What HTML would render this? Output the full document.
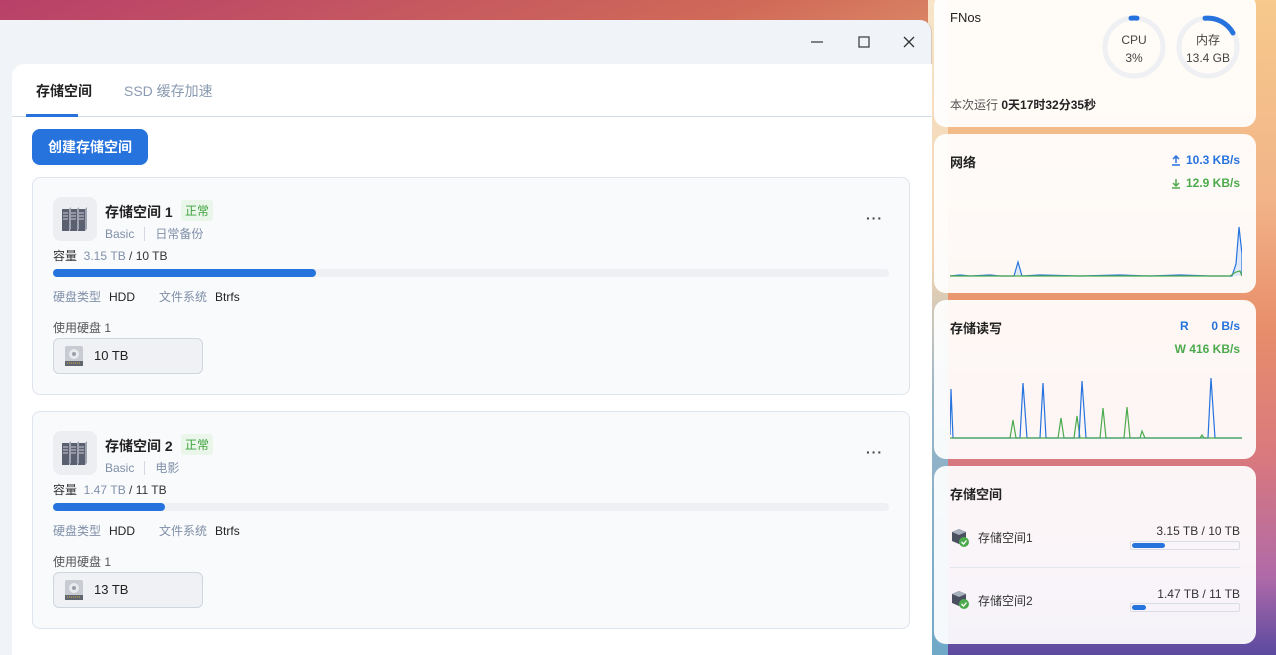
<!DOCTYPE html><html><head><meta charset="utf-8"><style>
*{box-sizing:border-box;margin:0;padding:0}
body{width:1276px;height:655px;overflow:hidden;position:relative;font-family:"Liberation Sans","Noto Sans CJK SC",sans-serif;color:#222;
background:linear-gradient(160deg,#b8406a 0%,#d06a58 25%,#eab07a 45%,#f3c9a0 60%,#e3a6b8 80%,#8a5ab8 100%)}
.bgr{position:absolute;left:928px;top:0;width:348px;height:655px;background:linear-gradient(180deg,#f6c98c 0%,#f2b488 30%,#e88e6a 50%,#d9787e 70%,#b06aa8 88%,#5a4aa0 100%)}
.bgr2{position:absolute;left:928px;top:0;width:20px;height:655px;background:linear-gradient(180deg,#f8e4c8,#f2d4b0 40%,#9ab6c8 60%,#70a8c8 100%)}
.win{position:absolute;left:0;top:20px;width:932px;height:635px;background:#f0f3f7;border-top-right-radius:12px;border-right:1px solid #d8c8b8}
.ctl{position:absolute;top:13px;color:#333}
.panel{position:absolute;left:12px;top:44px;width:920px;height:591px;background:#fff;border-top-left-radius:12px}
.tabs{height:53px;border-bottom:1px solid #d4dce6;position:relative}
.tab{position:absolute;top:17px;font-size:14px}
.btn{position:absolute;left:20px;top:65px;width:116px;height:36px;background:#2673dd;border-radius:8px;color:#fff;font-size:14px;font-weight:bold;text-align:center;line-height:36px}
.card{position:absolute;left:20px;width:878px;height:218px;background:#f9fafc;border:1px solid #dfe5ec;border-radius:8px}
.ico{position:absolute;left:20px;top:19px;width:44px;height:44px;background:#eceef2;border-radius:8px}
.t1{position:absolute;left:72px;top:24px;font-size:14px;font-weight:bold;color:#222}
.ok{position:absolute;left:148px;top:22px;background:#eaf6ea;color:#3fa43f;font-size:12px;padding:2px 4px;border-radius:3px}
.sub{position:absolute;left:72px;top:47px;font-size:12px;color:#8090a8}
.sub span{border-left:1px solid #d4d8e0;margin-left:10px;padding-left:10px}
.dots{position:absolute;right:26px;top:32px;font-size:14px;letter-spacing:1px;color:#444;font-weight:bold}
.cap{position:absolute;left:20px;top:69px;font-size:12px;color:#333}
.cap .g{color:#8090a8}
.bar{position:absolute;left:20px;top:91px;width:836px;height:8px;background:#eef0f3;border-radius:4px}
.bar div{height:8px;background:#2673dd;border-radius:4px}
.meta{position:absolute;left:20px;top:110px;font-size:12px;color:#8090a8}
.meta b{font-weight:normal;color:#222;margin:0 24px 0 8px}
.use{position:absolute;left:20px;top:141px;font-size:12px;color:#555}
.disk{position:absolute;left:20px;top:160px;width:150px;height:36px;background:#eff1f4;border:1px solid #cfd6de;border-radius:6px;font-size:13px;line-height:34px;padding-left:40px}
.w{position:absolute;left:934px;width:322px;background:rgba(255,255,255,.93);border-radius:12px}
.h{position:absolute;left:16px;font-size:13px;font-weight:bold;color:#222}
</style></head><body>
<div class="bgr"></div><div class="bgr2"></div>
<div class="win">
 <svg class="ctl" style="left:808px" width="18" height="18"><line x1="3" y1="9" x2="15" y2="9" stroke="#444" stroke-width="1.3"/></svg>
 <svg class="ctl" style="left:855px" width="18" height="18"><rect x="4" y="4" width="10" height="10" fill="none" stroke="#444" stroke-width="1.3"/></svg>
 <svg class="ctl" style="left:900px" width="18" height="18"><path d="M4 4L14 14M14 4L4 14" stroke="#333" stroke-width="1.3"/></svg>
 <div class="panel">
  <div class="tabs"><div class="tab" style="left:24px;font-weight:bold">存储空间</div><div style="position:absolute;left:14px;bottom:-1px;width:52px;height:3px;background:#2673dd"></div><div class="tab" style="left:112px;color:#8a9ab0">SSD 缓存加速</div></div>
  <div class="btn">创建存储空间</div>
  <div class="card" style="top:113px">
   <div class="ico"><svg width="44" height="44"><g fill="#5a6070"><rect x="9" y="12" width="7" height="22"/><rect x="17" y="12" width="7" height="22"/><rect x="25" y="12" width="7" height="22"/></g><g fill="#9ea4b0"><polygon points="16,12 18,10 18,32 16,34"/><polygon points="24,12 26,10 26,32 24,34"/><polygon points="32,12 34,10 34,32 32,34"/></g><g stroke="#c8ccd4" stroke-width="1"><path d="M10 16h5M10 19h5M10 22h5M18 16h5M18 19h5M18 22h5M26 16h5M26 19h5M26 22h5"/></g></svg></div>
   <div class="t1">存储空间 1</div><div class="ok">正常</div>
   <div class="sub">Basic<span>日常备份</span></div><div class="dots">···</div>
   <div class="cap">容量&nbsp;&nbsp;<span class="g">3.15 TB</span> / 10 TB</div>
   <div class="bar"><div style="width:263px"></div></div>
   <div class="meta">硬盘类型<b>HDD</b>文件系统<b>Btrfs</b></div>
   <div class="use">使用硬盘 1</div>
   <div class="disk"><svg style="position:absolute;left:9px;top:6px" width="22" height="22"><rect x="2" y="1" width="18" height="20" rx="2" fill="#c8ccd2"/><circle cx="11" cy="9" r="5" fill="#e8eaee"/><circle cx="11" cy="9" r="2" fill="#9aa0a8"/><rect x="2" y="16" width="18" height="5" fill="#606670"/><path d="M4 18h14" stroke="#d8b040" stroke-dasharray="1 1"/></svg>10 TB</div>
  </div>
  <div class="card" style="top:347px">
   <div class="ico"><svg width="44" height="44"><g fill="#5a6070"><rect x="9" y="12" width="7" height="22"/><rect x="17" y="12" width="7" height="22"/><rect x="25" y="12" width="7" height="22"/></g><g fill="#9ea4b0"><polygon points="16,12 18,10 18,32 16,34"/><polygon points="24,12 26,10 26,32 24,34"/><polygon points="32,12 34,10 34,32 32,34"/></g><g stroke="#c8ccd4" stroke-width="1"><path d="M10 16h5M10 19h5M10 22h5M18 16h5M18 19h5M18 22h5M26 16h5M26 19h5M26 22h5"/></g></svg></div>
   <div class="t1">存储空间 2</div><div class="ok">正常</div>
   <div class="sub">Basic<span>电影</span></div><div class="dots">···</div>
   <div class="cap">容量&nbsp;&nbsp;<span class="g">1.47 TB</span> / 11 TB</div>
   <div class="bar"><div style="width:112px"></div></div>
   <div class="meta">硬盘类型<b>HDD</b>文件系统<b>Btrfs</b></div>
   <div class="use">使用硬盘 1</div>
   <div class="disk"><svg style="position:absolute;left:9px;top:6px" width="22" height="22"><rect x="2" y="1" width="18" height="20" rx="2" fill="#c8ccd2"/><circle cx="11" cy="9" r="5" fill="#e8eaee"/><circle cx="11" cy="9" r="2" fill="#9aa0a8"/><rect x="2" y="16" width="18" height="5" fill="#606670"/><path d="M4 18h14" stroke="#d8b040" stroke-dasharray="1 1"/></svg>13 TB</div>
  </div>
 </div>
</div>

<div class="w" style="top:-6px;height:133px">
 <div class="h" style="top:16px;font-weight:normal;font-size:13px">FNos</div>
 <svg style="position:absolute;left:167px;top:20px" width="66" height="66"><circle cx="33" cy="33" r="29" fill="none" stroke="#eef0f3" stroke-width="5"/><path d="M30 4.2A29 29 0 0 1 36 4.2" fill="none" stroke="#2673dd" stroke-width="5" stroke-linecap="round"/><text x="33" y="30" text-anchor="middle" font-size="12" fill="#444" font-family="Liberation Sans">CPU</text><text x="33" y="48" text-anchor="middle" font-size="12" fill="#444" font-family="Liberation Sans">3%</text></svg>
 <svg style="position:absolute;left:241px;top:20px" width="66" height="66"><circle cx="33" cy="33" r="29" fill="none" stroke="#eef0f3" stroke-width="5"/><path d="M30 4.2A29 29 0 0 1 58 19" fill="none" stroke="#2673dd" stroke-width="5" stroke-linecap="round"/><text x="33" y="30" text-anchor="middle" font-size="12" fill="#444" font-family="Liberation Sans,Noto Sans CJK SC">内存</text><text x="33" y="48" text-anchor="middle" font-size="12" fill="#444" font-family="Liberation Sans">13.4 GB</text></svg>
 <div style="position:absolute;left:16px;top:102px;font-size:12px;color:#555">本次运行 <b style="color:#222">0天17时32分35秒</b></div>
</div>
<div class="w" style="top:134px;height:159px">
 <div class="h" style="top:18px">网络</div>
 <svg style="position:absolute;left:237px;top:20px" width="10" height="12"><path d="M1 11h8M5 9V2M2 5l3-3l3 3" stroke="#2673dd" stroke-width="1.5" fill="none"/></svg>
 <div style="position:absolute;right:16px;top:19px;font-size:12px;color:#2673dd;font-weight:bold">10.3 KB/s</div>
 <svg style="position:absolute;left:237px;top:43px" width="10" height="12"><path d="M1 11h8M5 2V9M2 6l3 3l3-3" stroke="#4caa4c" stroke-width="1.5" fill="none"/></svg>
 <div style="position:absolute;right:16px;top:42px;font-size:12px;color:#4caa4c;font-weight:bold">12.9 KB/s</div>
 <svg style="position:absolute;left:16px;top:80px" width="292" height="64"><path d="M0 62 L10 61 20 62 40 61 50 62 64 62 68 48 72 62 90 61 130 62 170 61 200 62 230 61 260 62 282 62 286 50 289 13 292 40 292 62 Z" fill="#dfe9f8"/><polyline points="0,62 10,61 20,62 40,61 50,62 64,62 68,48 72,62 90,61 130,62 170,61 200,62 230,61 260,62 282,62 286,50 289,13 292,40 292,62" fill="none" stroke="#2673dd" stroke-width="1.2"/><polyline points="0,62 100,62 200,62 280,62 286,58 290,57 292,62" fill="none" stroke="#4caa4c" stroke-width="1.2"/></svg>
</div>
<div class="w" style="top:300px;height:159px">
 <div class="h" style="top:18px">存储读写</div>
 <div style="position:absolute;left:246px;top:19px;font-size:12px;color:#2673dd;font-weight:bold">R</div>
 <div style="position:absolute;right:16px;top:19px;font-size:12px;color:#2673dd;font-weight:bold">0 B/s</div>
 <div style="position:absolute;right:16px;top:42px;font-size:12px;color:#4caa4c;font-weight:bold">W 416 KB/s</div>
 <svg style="position:absolute;left:16px;top:75px" width="292" height="70"><polyline points="0,63 60,63 63,45 66,63 108,63 111,43 114,63 124,63 127,41 130,63 150,63 153,33 156,63 174,63 177,32 180,63 190,63 192,56 195,63 250,63 252,60 254,63 292,63" fill="none" stroke="#4caa4c" stroke-width="1.2"/><polyline points="0,60 1,14 3,63 70,63 73,8 77,63 90,63 93,8 96,63 129,63 132,6 136,63 258,63 261,3 265,63 292,63" fill="none" stroke="#2673dd" stroke-width="1.2"/><polyline points="0,63 292,63" stroke="#4caa4c" stroke-width="1"/></svg>
</div>
<div class="w" style="top:466px;height:178px">
 <div class="h" style="top:18px">存储空间</div>
 <svg style="position:absolute;left:16px;top:61px" width="20" height="20"><path d="M2 5L9 2L16 5V14L9 17L2 14Z" fill="#4a5060"/><path d="M2 5L9 8L16 5L9 2Z" fill="#a8b0bc"/><circle cx="14" cy="15" r="5" fill="#4caa4c"/><path d="M11.5 15l2 2l3-3.5" stroke="#fff" fill="none" stroke-width="1.3"/></svg>
 <div style="position:absolute;left:44px;top:63px;font-size:12px;color:#333">存储空间1</div>
 <div style="position:absolute;right:16px;top:58px;font-size:12px;color:#333">3.15 TB / 10 TB</div>
 <div style="position:absolute;left:196px;top:75px;width:110px;height:9px;border:1px solid #d8dce4;border-radius:2px"><div style="width:33px;height:5px;margin:1px;background:#2673dd;border-radius:3px"></div></div>
 <div style="position:absolute;left:16px;right:16px;top:101px;height:1px;background:#e2e6ec"></div>
 <svg style="position:absolute;left:16px;top:123px" width="20" height="20"><path d="M2 5L9 2L16 5V14L9 17L2 14Z" fill="#4a5060"/><path d="M2 5L9 8L16 5L9 2Z" fill="#a8b0bc"/><circle cx="14" cy="15" r="5" fill="#4caa4c"/><path d="M11.5 15l2 2l3-3.5" stroke="#fff" fill="none" stroke-width="1.3"/></svg>
 <div style="position:absolute;left:44px;top:126px;font-size:12px;color:#333">存储空间2</div>
 <div style="position:absolute;right:16px;top:121px;font-size:12px;color:#333">1.47 TB / 11 TB</div>
 <div style="position:absolute;left:196px;top:137px;width:110px;height:9px;border:1px solid #d8dce4;border-radius:2px"><div style="width:14px;height:5px;margin:1px;background:#2673dd;border-radius:3px"></div></div>
</div>
</body></html>
